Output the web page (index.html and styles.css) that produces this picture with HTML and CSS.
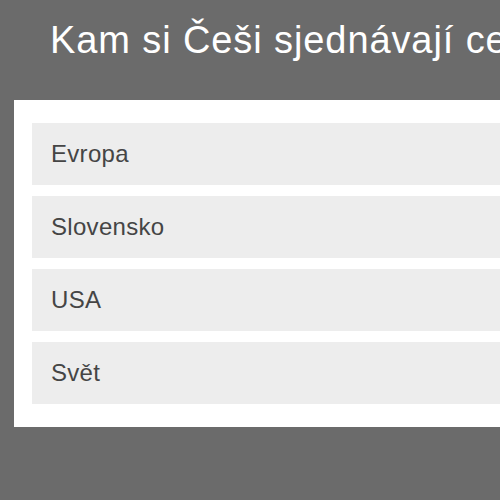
FILE: index.html
```html
<!DOCTYPE HTML>
<html>
	<head>
		<meta charset="utf-8">
		<meta name="viewport" content="width=device-width, initial-scale=1">
		<title>Kam si Češi sjednávají cestovní pojištění</title>
		<link rel="stylesheet" href="styles.css">
	</head>

	<body>
		<div class="page">
			<h1 class="title">Kam si Češi sjednávají cestovní pojištění</h1>

			<div class="panel">
				<div class="option">Evropa</div>
				<div class="option">Slovensko</div>
				<div class="option">USA</div>
				<div class="option">Svět</div>
			</div>
		</div>
	</body>
</html>
```

FILE: styles.css
```css
*{
	box-sizing: border-box;
}
html, body{
	margin:0;
	padding:0;
	height:100%;
}
body{
	background-color: #6b6b6b;
	font-family: "Liberation Sans", Arial, sans-serif;
	overflow: hidden;
}
.page{
	width: 700px;
	padding-top: 18px;
	padding-left: 14px;
}
.title{
	margin: 0 0 0 36px;
	color: #ffffff;
	font-weight: normal;
	font-size: 38px;
	letter-spacing: 0.9px;
	line-height: 44px;
	white-space: nowrap;
	height: 82px;
}
.panel{
	background-color: #ffffff;
	padding: 23px 18px;
	display: flex;
	flex-direction: column;
	gap: 11px;
}
.option{
	height: 62px;
	background-color: #ededed;
	color: #454545;
	font-size: 24px;
	letter-spacing: 0.3px;
	display: flex;
	align-items: center;
	padding-left: 19px;
}
```
